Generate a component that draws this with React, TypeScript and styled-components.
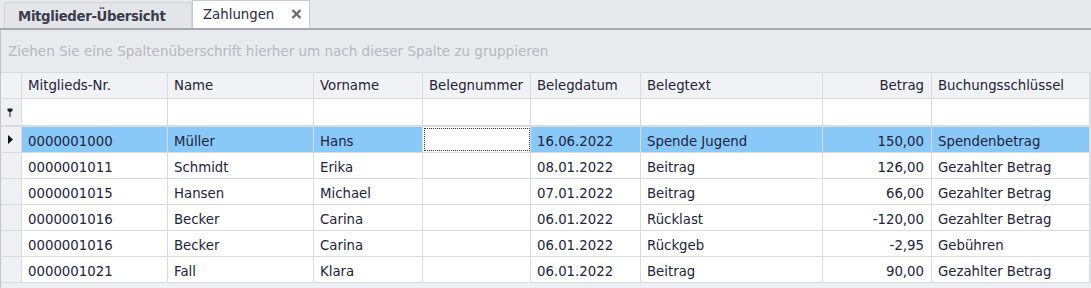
import React from 'react'
import styled, { createGlobalStyle } from 'styled-components'

const GlobalStyle = createGlobalStyle`
  html, body {
    margin: 0;
    padding: 0;
    background: #ffffff;
  }
  body {
    font-family: 'DejaVu Sans', Verdana, sans-serif;
  }
`

const COLUMNS = '21px 146px 146px 109px 108px 110px 182px 109px 158px'

const Window = styled.div`
  width: 1091px;
  height: 288px;
  overflow: hidden;
  background: #eeeff2;
  font-family: 'DejaVu Sans', Verdana, sans-serif;
  font-size: 13.3px;
  color: #23233a;
`

const TabStrip = styled.div`
  display: flex;
  align-items: flex-end;
  height: 28px;
  padding-left: 4px;
  background: #e8e9ed;
  border-bottom: 2px solid #a7a8ae;
`

const Tab = styled.div<{ $active?: boolean }>`
  box-sizing: border-box;
  display: flex;
  align-items: center;
  height: ${({ $active }) => ($active ? '28px' : '26px')};
  padding: ${({ $active }) => ($active ? '0 7px 0 10px' : '1px 0 0 13px')};
  width: ${({ $active }) => ($active ? '118px' : '188px')};
  background: ${({ $active }) => ($active ? '#ffffff' : '#e4e5e9')};
  border: 1px solid ${({ $active }) => ($active ? '#c9cacf' : '#d3d4d8')};
  border-bottom: none;
  font-weight: ${({ $active }) => ($active ? 400 : 700)};
  letter-spacing: ${({ $active }) => ($active ? '0' : '-0.35px')};
  color: ${({ $active }) => ($active ? '#2a2a40' : '#3b3c4e')};
`

const TabLabel = styled.span`
  flex: 1;
  white-space: nowrap;
`

const CloseIcon = styled.svg`
  width: 11px;
  height: 10px;
  margin-bottom: 1px;
`

const GroupPanel = styled.div`
  box-sizing: border-box;
  height: 42px;
  display: flex;
  align-items: center;
  padding-left: 7px;
  background: #e9eaee;
  border-left: 1px solid #c4c5cb;
  color: #b7b8c0;
  font-size: 13.5px;
  white-space: nowrap;
`

const Grid = styled.div`
  border-left: 1px solid #c4c5cb;
  border-right: 2px solid #e1e2e6;
  background: #ffffff;
`

const Row = styled.div<{ $height: number; $separator?: boolean }>`
  display: grid;
  grid-template-columns: ${COLUMNS};
  height: ${({ $height }) => $height}px;
  border-bottom: ${({ $separator }) => ($separator ? '2px' : '1px')} solid #d9dbe1;
  box-sizing: border-box;
`

const HeaderRow = styled(Row)`
  background: #f1f2f5;
  border-top: 1px solid #d9dbe1;
`

const Cell = styled.div<{ $right?: boolean; $selected?: boolean; $focused?: boolean; $data?: boolean }>`
  box-sizing: border-box;
  display: flex;
  align-items: center;
  justify-content: ${({ $right }) => ($right ? 'flex-end' : 'flex-start')};
  padding: ${({ $right }) => ($right ? '0 7px 0 0' : '0 0 0 6px')};
  padding-top: ${({ $data }) => ($data ? '3px' : '0')};
  border-right: 1px solid #d9dbe1;
  white-space: nowrap;
  overflow: hidden;
  background: ${({ $selected, $focused }) => ($focused ? '#ffffff' : $selected ? '#88c9f8' : 'transparent')};
  outline: ${({ $focused }) => ($focused ? '1px dotted #30303a' : 'none')};
  outline-offset: -2px;
`

const Indicator = styled.div`
  box-sizing: border-box;
  display: flex;
  align-items: center;
  justify-content: center;
  padding-right: 2px;
  background: #eff0f3;
  border-right: 1px solid #d9dbe1;
`

const HeaderIndicator = styled(Indicator)`
  background: #f1f2f5;
`

const Footer = styled.div`
  height: 10px;
  background: #eeeff2;
  border-left: 1px solid #c4c5cb;
`

type Payment = {
  nr: string
  name: string
  vorname: string
  belegnummer: string
  datum: string
  text: string
  betrag: string
  schluessel: string
}

const payments: Payment[] = [
  { nr: '0000001000', name: 'Müller', vorname: 'Hans', belegnummer: '', datum: '16.06.2022', text: 'Spende Jugend', betrag: '150,00', schluessel: 'Spendenbetrag' },
  { nr: '0000001011', name: 'Schmidt', vorname: 'Erika', belegnummer: '', datum: '08.01.2022', text: 'Beitrag', betrag: '126,00', schluessel: 'Gezahlter Betrag' },
  { nr: '0000001015', name: 'Hansen', vorname: 'Michael', belegnummer: '', datum: '07.01.2022', text: 'Beitrag', betrag: '66,00', schluessel: 'Gezahlter Betrag' },
  { nr: '0000001016', name: 'Becker', vorname: 'Carina', belegnummer: '', datum: '06.01.2022', text: 'Rücklast', betrag: '-120,00', schluessel: 'Gezahlter Betrag' },
  { nr: '0000001016', name: 'Becker', vorname: 'Carina', belegnummer: '', datum: '06.01.2022', text: 'Rückgeb', betrag: '-2,95', schluessel: 'Gebühren' },
  { nr: '0000001021', name: 'Fall', vorname: 'Klara', belegnummer: '', datum: '06.01.2022', text: 'Beitrag', betrag: '90,00', schluessel: 'Gezahlter Betrag' },
]

const headers = ['Mitglieds-Nr.', 'Name', 'Vorname', 'Belegnummer', 'Belegdatum', 'Belegtext', 'Betrag', 'Buchungsschlüssel']

const ArrowIcon = () => (
  <svg width="5" height="9" viewBox="0 0 5 9">
    <path d="M0 0 L5 4.5 L0 9 Z" fill="#111" />
  </svg>
)

const PinIcon = () => (
  <svg width="6" height="9" viewBox="0 0 6 9">
    <path d="M0.5 0.5 H5.5 V2.5 L4 4 H2 L0.5 2.5 Z" fill="#222" />
    <rect x="2.5" y="4" width="1" height="5" fill="#222" />
  </svg>
)

const App: React.FC = () => {
  const selectedIndex = 0

  return (
    <>
      <GlobalStyle />
      <Window>
        <TabStrip>
          <Tab>
            <TabLabel>Mitglieder-Übersicht</TabLabel>
          </Tab>
          <Tab $active>
            <TabLabel>Zahlungen</TabLabel>
            <CloseIcon viewBox="0 0 11 10">
              <path d="M1.5 1 L9.5 9 M9.5 1 L1.5 9" stroke="#6b6c74" strokeWidth="2.4" />
            </CloseIcon>
          </Tab>
        </TabStrip>
        <GroupPanel>Ziehen Sie eine Spaltenüberschrift hierher um nach dieser Spalte zu gruppieren</GroupPanel>
        <Grid>
          <HeaderRow $height={27}>
            <HeaderIndicator />
            {headers.map((h) => (
              <Cell key={h} $right={h === 'Betrag'}>
                {h}
              </Cell>
            ))}
          </HeaderRow>
          <Row $height={28} $separator>
            <Indicator>
              <PinIcon />
            </Indicator>
            {headers.map((h) => (
              <Cell key={h} />
            ))}
          </Row>
          {payments.map((p, i) => {
            const selected = i === selectedIndex
            return (
              <Row key={i} $height={26}>
                <Indicator>{selected && <ArrowIcon />}</Indicator>
                <Cell $data $selected={selected}>{p.nr}</Cell>
                <Cell $data $selected={selected}>{p.name}</Cell>
                <Cell $data $selected={selected}>{p.vorname}</Cell>
                <Cell $data $selected={selected} $focused={selected}>
                  {p.belegnummer}
                </Cell>
                <Cell $data $selected={selected}>{p.datum}</Cell>
                <Cell $data $selected={selected}>{p.text}</Cell>
                <Cell $data $selected={selected} $right>
                  {p.betrag}
                </Cell>
                <Cell $data $selected={selected}>{p.schluessel}</Cell>
              </Row>
            )
          })}
        </Grid>
        <Footer />
      </Window>
    </>
  )
}

export default App
